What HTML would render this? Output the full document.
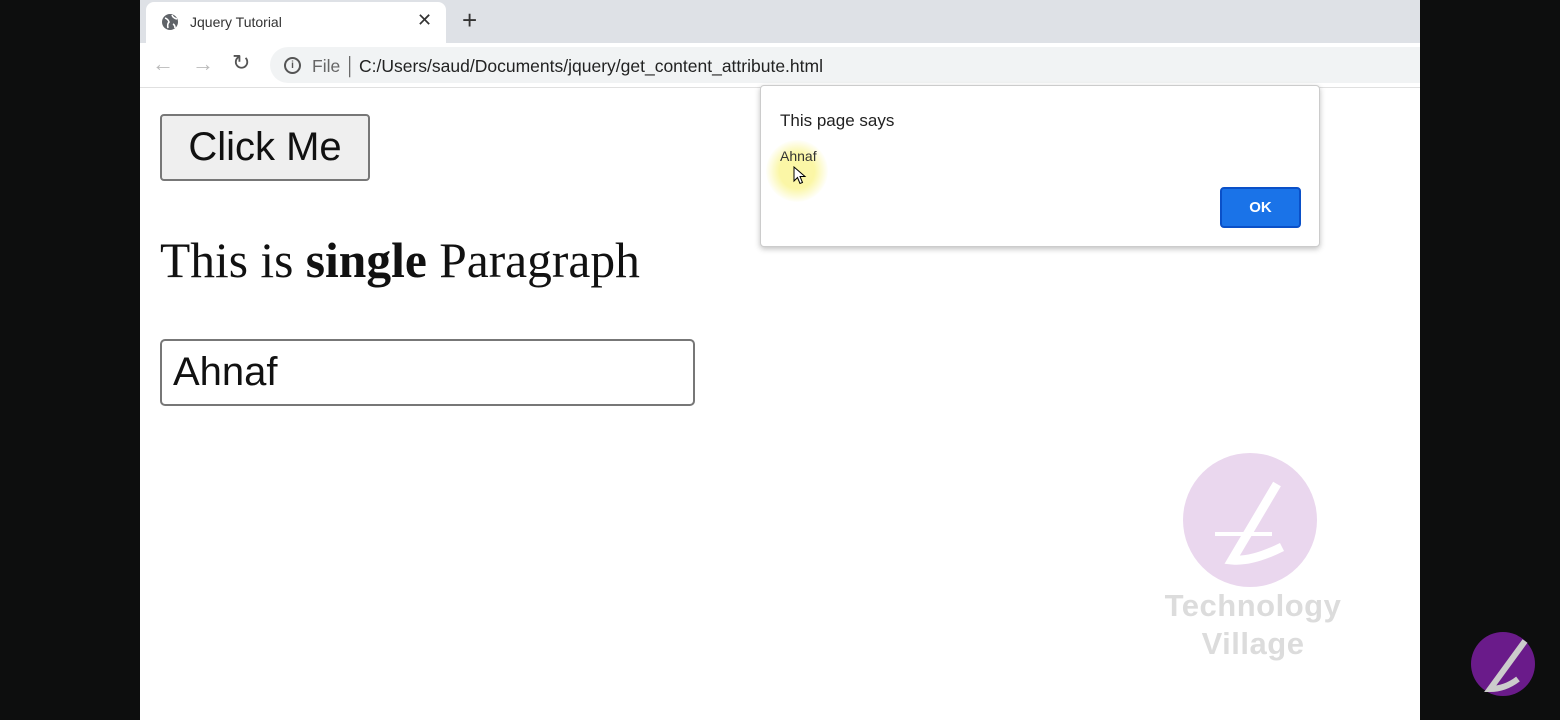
<!DOCTYPE html>
<html><head><meta charset="utf-8"><style>
*{margin:0;padding:0;box-sizing:border-box}
body{width:1560px;height:720px;background:#0d0e0e;position:relative;overflow:hidden;font-family:"Liberation Sans",sans-serif}
.win{position:absolute;left:140px;top:0;width:1280px;height:720px;background:#fff;overflow:hidden}
.tabbar{position:absolute;left:0;top:0;width:1280px;height:43px;background:#dee1e6}
.tab{position:absolute;left:6px;top:2px;width:300px;height:42px;background:#fff;border-radius:8px 8px 0 0}
.tb{position:absolute;left:0;top:43px;width:1280px;height:45px;background:#fff;border-bottom:1px solid #e0e0e0}
.omni{position:absolute;left:130px;top:4px;width:1170px;height:36px;background:#f1f3f4;border-radius:18px}
.abs{position:absolute}
</style></head><body>
<div class="win">
<div class="tabbar"><div class="tab">
<svg class="abs" style="left:15px;top:11px" width="18" height="18"><circle cx="9" cy="9" r="8" fill="#5f6368"/><path d="M4 5 q3 1 4 4 q-2 2 -1 6 M11 2 q1 3 5 4 M12 11 q2 1 2 4" stroke="#fff" stroke-width="1.6" fill="none"/></svg>
<div class="abs" style="left:44px;top:12px;font-size:14px;color:#333">Jquery Tutorial</div>
<div class="abs" style="left:271px;top:8px;font-size:18px;color:#333">✕</div>
</div>
<div class="abs" style="left:322px;top:5px;font-size:26px;color:#333">+</div>
</div>
<div class="tb">
<div class="abs" style="left:12px;top:8px;font-size:22px;color:#bbb">←</div>
<div class="abs" style="left:52px;top:8px;font-size:22px;color:#bbb">→</div>
<div class="abs" style="left:92px;top:7px;font-size:22px;color:#555">↻</div>
<div class="omni">
<div class="abs" style="left:14px;top:10px;width:17px;height:17px;border:2px solid #555;border-radius:50%;font-size:10px;text-align:center;line-height:13px;color:#555;font-weight:bold">i</div>
<div class="abs" style="left:42px;top:9px;font-size:17.5px;color:#666">File │</div>
<div class="abs" style="left:89px;top:9px;font-size:17.5px;color:#222">C:/Users/saud/Documents/jquery/get_content_attribute.html</div>
</div></div>
<div class="abs" style="left:20px;top:114px;width:210px;height:67px;border:2px solid #777;border-radius:4px;background:#efefef;font-size:40px;text-align:center;line-height:62px;color:#111">Click Me</div>
<div class="abs" style="left:20px;top:232px;font-family:'Liberation Serif',serif;font-size:49.5px;color:#111">This is <b>single</b> Paragraph</div>
<div class="abs" style="left:20px;top:339px;width:535px;height:67px;border:2px solid #777;border-radius:5px;font-size:40px;padding-left:11px;line-height:62px;color:#111">Ahnaf</div>
<div class="abs" style="left:620px;top:85px;width:560px;height:162px;border:1px solid #ccc;border-radius:4px;background:#fff;box-shadow:0 2px 6px rgba(0,0,0,.25)">
<div class="abs" style="left:19px;top:25px;font-size:17px;color:#222">This page says</div>
<div class="abs" style="left:5px;top:54px;width:62px;height:62px;border-radius:50%;background:radial-gradient(circle,rgba(250,245,150,.85) 40%,rgba(250,245,150,0) 72%)"></div>
<div class="abs" style="left:19px;top:62px;font-size:14px;color:#333">Ahnaf</div>
<svg class="abs" style="left:32px;top:80px" width="14" height="20"><path d="M1 1 L1 15 L4.5 11.5 L7 17.5 L9.5 16.5 L7 10.5 L12 10.5 Z" fill="#fff" stroke="#000" stroke-width="1"/></svg>
<div class="abs" style="left:459px;top:101px;width:81px;height:41px;border:2px solid #0a50c8;border-radius:4px;background:#1a73e8;color:#fff;font-weight:bold;font-size:15px;text-align:center;line-height:37px">OK</div>
</div>
<svg class="abs" style="left:1042px;top:452px" width="140" height="140"><circle cx="68" cy="68" r="67" fill="#ead7ee"/><path d="M95 32 L50 108 Q70 110 100 95" stroke="#fff" stroke-width="9" fill="none"/><path d="M33 82 H90" stroke="#fff" stroke-width="4"/></svg>
<div class="abs" style="left:1010px;top:587px;width:206px;text-align:center;font-size:31px;font-weight:bold;color:#dcdcdc;line-height:38px;letter-spacing:0.5px">Technology<br>Village</div>
</div>
<svg class="abs" style="left:1470px;top:631px" width="66" height="66"><circle cx="33" cy="33" r="32" fill="#6a1b8a"/><path d="M55 10 L20 58 Q35 58 48 48" stroke="#ccc" stroke-width="6" fill="none"/></svg>
</body></html>
